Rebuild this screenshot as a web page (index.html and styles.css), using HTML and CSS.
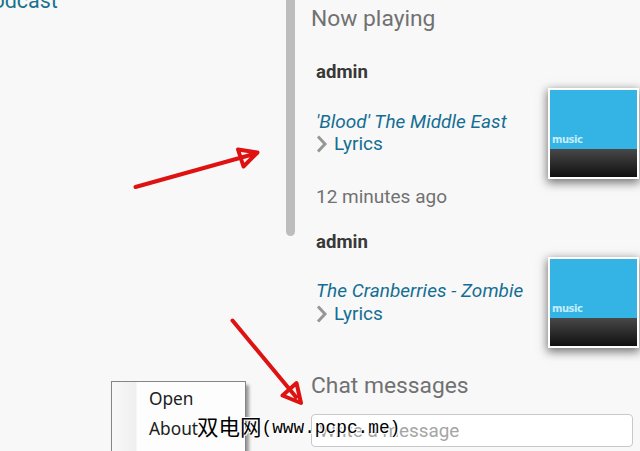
FILE: index.html
```html
<!DOCTYPE html>
<html lang="en">
<head>
<meta charset="utf-8">
<title>Now playing</title>
<link rel="stylesheet" href="styles.css">
</head>
<body>
<div class="app">
  <main class="library"><a class="library-link">Podcast</a></main>
  <div class="scrollbar"><div class="thumb"></div></div>
  <aside class="sidebar">
    <h2 class="heading now">Now playing</h2>
    <section class="entry">
      <div class="info">
        <div class="user">admin</div>
        <a class="song blood">'Blood' The Middle East</a>
        <a class="lyrics"><svg class="chevron" viewBox="0 0 12 18"><path d="M2 1.5 9 9 2 16.5"/></svg>Lyrics</a>
        <div class="ago">12 minutes ago</div>
      </div>
      <div class="cover"><div class="art">music</div><div class="base"></div></div>
    </section>
    <section class="entry second">
      <div class="info">
        <div class="user">admin</div>
        <a class="song zombie">The Cranberries - Zombie</a>
        <a class="lyrics"><svg class="chevron" viewBox="0 0 12 18"><path d="M2 1.5 9 9 2 16.5"/></svg>Lyrics</a>
      </div>
      <div class="cover"><div class="art">music</div><div class="base"></div></div>
    </section>
    <h2 class="heading chat">Chat messages</h2>
    <div class="field">Write a message</div>
  </aside>
  <div class="menu">
    <div class="menu-item">Open</div>
    <div class="menu-item">About</div>
  </div>
  <svg class="arrows" viewBox="0 0 640 451">
    <path d="M135.500 187 254 154M238 149.500 257.500 152.500 243.500 166.500Z"/>
    <path d="M232.500 320.500 296 397M296.500 383 301 403 282.500 395.500Z"/>
  </svg>
  <div class="watermark"><span class="site">双电网</span><span class="url">(www.pcpc.me)</span></div>
</div>
</body>
</html>
```

FILE: styles.css
```css
* { box-sizing: border-box; }
body { margin: 0; font-family: Roboto, "Liberation Sans", sans-serif; background: #f8f8f8; }
.app { position: relative; display: grid; grid-template-columns: 286px 9px 1fr; width: 640px; height: 451px; overflow: hidden; }
.library { overflow: hidden; }
.library-link { display: block; margin: -12px 0 0 -21px; font-size: 21.500px; line-height: 26px; color: #19728d; }
.thumb { height: 236px; background: #bdbdbd; border-radius: 0 0 5px 5px; }
.sidebar { padding: 0 1px 0 16px; min-width: 0; }
.heading { margin: 0; font-weight: 400; font-size: 22.8px; line-height: 28px; color: #717171; white-space: nowrap; }
.now { padding-top: 5px; height: 33px; }
.entry { display: flex; justify-content: space-between; height: 170px; padding: 28px 0 0 5px; }
.second { height: 169px; }
.info { white-space: nowrap; font-size: 19px; line-height: 22px; }
.user { font-weight: 700; font-size: 18.6px; color: #383838; }
.song { display: block; width: max-content; margin-top: 28px; font-style: italic; letter-spacing: 0.03px; color: #146e93; }
.second .song { margin-top: 27px; }
.lyrics { display: flex; align-items: center; gap: 6px; color: #146e93; }
.second .lyrics { margin-top: 1px; }
.chevron { width: 12px; height: 18px; fill: none; stroke: #969696; stroke-width: 3; }
.ago { margin-top: 31px; color: #717171; }
.cover { width: 91px; height: 91px; margin-top: 27px; border: 2px solid #fff; box-shadow: 0 3px 9px 1px #777; display: flex; flex-direction: column; flex-shrink: 0; }
.second .cover { margin-top: 26px; }
.art { display: flex; align-items: flex-end; height: 59px; padding: 0 0 3px 2px; background: #34b4e4; color: #c4edfb; font: 700 10px/12px "DejaVu Sans", sans-serif; letter-spacing: -0.5px; }
.base { flex: 1; background: linear-gradient(#484848, #101010); }
.field { width: 322px; height: 33px; margin-top: 14px; padding: 0 7px; border: 1px solid #c8c8c8; border-radius: 4px; background: #fff; font-size: 18.9px; line-height: 32px; color: #a5a5a5; }
.menu { position: absolute; left: 111px; top: 381px; width: 135px; height: 90px; padding: 2px 0 0 37px; border: 1px solid #858585; background: linear-gradient(90deg, #f8f8f8, #efefef 24px, #fdfdfd 25px); box-shadow: 3px 4px 3px #999; font: 17.3px/30px "Noto Sans", sans-serif; color: #202020; }
.arrows { position: absolute; inset: 0; width: 640px; height: 451px; fill: none; stroke: #df1212; stroke-width: 4; stroke-linecap: round; stroke-linejoin: round; }
.watermark { position: absolute; left: 197px; top: 411px; display: flex; align-items: center; height: 30px; color: #000; white-space: nowrap; text-shadow: 1px 1px #fff, -1px -1px #fff; }
.site { font: 21.500px/30px "Noto Sans CJK SC", sans-serif; }
.url { font: 17.8px/30px "Liberation Mono", monospace; padding-top: 3px; }
```
